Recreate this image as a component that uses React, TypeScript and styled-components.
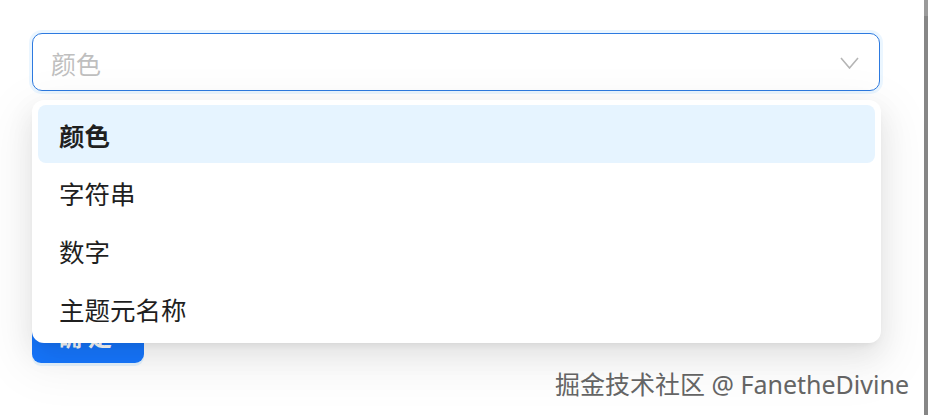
import styled, { createGlobalStyle } from 'styled-components';

const GlobalStyle = createGlobalStyle`
  html, body {
    margin: 0;
    padding: 0;
    background: #ffffff;
  }
  body {
    font-family: "Noto Sans", "Noto Sans CJK SC", sans-serif;
  }
`;

const Page = styled.div`
  display: flex;
  width: 928px;
  height: 415px;
  overflow: hidden;
  position: relative;
`;

const Main = styled.div`
  flex: 1;
  position: relative;
  padding: 33px 44px 0 32px;
`;

const ScrollEdge = styled.div`
  width: 4px;
  background: #868686;
  border-top: 16px solid #9a9a9a;
  box-sizing: border-box;
`;

const SelectBox = styled.div`
  height: 58px;
  box-sizing: border-box;
  border: 1px solid #2d7ae0;
  border-radius: 10px;
  background: #fff;
  box-shadow: 0 0 0 3px rgba(5, 145, 255, 0.08);
  display: flex;
  align-items: center;
  justify-content: space-between;
  padding: 1px 20px 0 18px;
`;

const Placeholder = styled.span`
  font-family: "Noto Sans CJK SC", sans-serif;
  font-size: 25px;
  color: #bfbfbf;
`;

const Field = styled.div`
  position: relative;
`;

const Dropdown = styled.div`
  position: absolute;
  top: 9px;
  left: 0;
  right: -1px;
  z-index: 2;
  background: #fff;
  border-radius: 12px;
  padding: 5px 6px 6px;
  box-shadow: 0 10px 28px 0 rgba(0, 0, 0, 0.08),
    0 5px 10px -6px rgba(0, 0, 0, 0.12), 0 16px 48px 14px rgba(0, 0, 0, 0.05);
`;

const Option = styled.div<{ $active?: boolean }>`
  height: 58px;
  display: flex;
  align-items: center;
  padding: 0 21px;
  box-sizing: border-box;
  border-radius: 8px;
  font-family: "Noto Sans CJK SC", sans-serif;
  font-size: 25.5px;
  color: #1f1f1f;
  background: ${(p) => (p.$active ? '#e6f4ff' : 'transparent')};
  font-weight: ${(p) => (p.$active ? 700 : 400)};
`;

const Form = styled.div`
  padding-top: 216px;
`;

const Button = styled.button`
  width: 112px;
  height: 56px;
  border: none;
  border-radius: 9px;
  background: #1677ff;
  color: #fff;
  font-family: "Noto Sans CJK SC", sans-serif;
  font-size: 24px;
  font-weight: 700;
  letter-spacing: 6px;
  box-shadow: 0 3px 0 rgba(5, 145, 255, 0.1);
`;

const Watermark = styled.div`
  position: absolute;
  right: 15px;
  bottom: 14px;
  font-family: "Noto Sans", "Noto Sans CJK SC", sans-serif;
  font-size: 25px;
  color: #666666;
  text-shadow: 1px 1px 0 #ffffff, -1px -1px 0 rgba(255, 255, 255, 0.6);
  white-space: nowrap;
`;

const Chevron = () => (
  <svg width="19" height="12" viewBox="0 0 19 12" fill="none">
    <path d="M1 1 L9.5 11 L18 1" stroke="#b5b5b5" strokeWidth="1.6" />
  </svg>
);

const OPTIONS = ['颜色', '字符串', '数字', '主题元名称'];

export default function App() {
  return (
    <Page>
      <GlobalStyle />
      <Main>
        <SelectBox>
          <Placeholder>颜色</Placeholder>
          <Chevron />
        </SelectBox>
        <Field>
          <Dropdown>
            {OPTIONS.map((o, i) => (
              <Option key={o} $active={i === 0}>
                {o}
              </Option>
            ))}
          </Dropdown>
          <Form>
            <Button>确定</Button>
          </Form>
        </Field>
        <Watermark>掘金技术社区 @ FanetheDivine</Watermark>
      </Main>
      <ScrollEdge />
    </Page>
  );
}
